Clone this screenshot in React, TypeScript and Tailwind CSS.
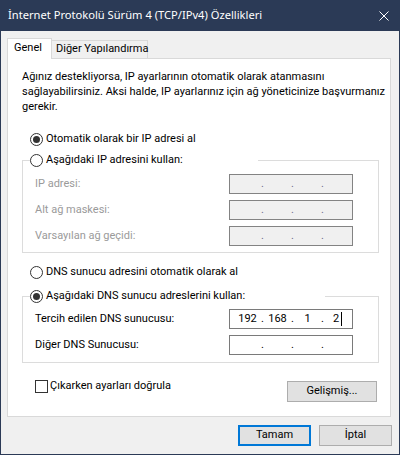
import React from "react";

function Radio({ checked }: { checked?: boolean }) {
  return (
    <svg width="13" height="13" viewBox="0 0 13 13" className="shrink-0">
      <circle cx="6.5" cy="6.5" r="6" fill="white" stroke="#333333" strokeWidth="1" />
      {checked && <circle cx="6.5" cy="6.5" r="3.5" fill="#333333" />}
    </svg>
  );
}

function IpField({ values, disabled, caret }: { values?: string[]; disabled?: boolean; caret?: boolean }) {
  const v = values ?? ["", "", "", ""];
  const dotColor = disabled ? "text-[#6d6d8d]" : "text-black";
  return (
    <div
      className={`w-[124px] h-[20px] border flex items-center pl-[5px] ${
        disabled ? "bg-[#f0f0f0] border-[#838383]" : "bg-white border-[#7a7a7a]"
      }`}
    >
      <span className="w-[25px] text-center">{v[0]}</span>
      <span className={`w-[5px] text-center ${dotColor}`}>.</span>
      <span className="w-[25px] text-center">{v[1]}</span>
      <span className={`w-[5px] text-center ${dotColor}`}>.</span>
      <span className="w-[25px] text-center">{v[2]}</span>
      <span className={`w-[5px] text-center ${dotColor}`}>.</span>
      <span className="w-[25px] flex items-center justify-center">
        <span>{v[3]}</span>
        {caret && <span className="inline-block w-px h-[14px] bg-black ml-[2px]" />}
      </span>
    </div>
  );
}

function FieldRow({ label, disabled, values, caret }: { label: string; disabled?: boolean; values?: string[]; caret?: boolean }) {
  return (
    <div className="flex items-center pl-[5px]">
      <span className={`w-[194px] whitespace-nowrap ${disabled ? "text-[#9a9a9a]" : "text-black"}`}>{label}</span>
      <IpField disabled={disabled} values={values} caret={caret} />
    </div>
  );
}

export default function App() {
  return (
    <div className="w-[400px] h-[455px] flex flex-col font-['Roboto',sans-serif] text-[11px] text-black select-none">
      {/* Title bar */}
      <div className="h-[31px] bg-[#2b3a56] flex items-center justify-between pl-[8px] pr-[11px] shrink-0">
        <span className="text-white text-[11.15px] font-['Noto_Sans',sans-serif] whitespace-nowrap">
          İnternet Protokolü Sürüm 4 (TCP/IPv4) Özellikleri
        </span>
        <svg width="10" height="10" viewBox="0 0 10 10">
          <path d="M0.5 0.5 L9.5 9.5 M9.5 0.5 L0.5 9.5" stroke="white" strokeWidth="1" />
        </svg>
      </div>

      {/* Body */}
      <div className="flex-1 bg-[#f0f0f0] border-x border-b border-[#2b3a56] flex flex-col pl-[6px] pr-[7px]">
        {/* Tabs */}
        <div className="flex items-end mt-[7px] h-[20px]">
          <div className="relative z-10 w-[45px] h-[21px] -mb-px bg-white border-t border-x border-[#d9d9d9] flex items-center pl-[6px] pb-[1px] whitespace-nowrap">
            Genel
          </div>
          <div className="w-[96px] h-[18px] bg-[#f0f0f0] border-t border-r border-[#d9d9d9] flex items-center pl-[4px] whitespace-nowrap">
            Diğer Yapılandırma
          </div>
        </div>

        {/* Panel */}
        <div className="w-[384px] h-[359px] bg-white border border-[#d9d9d9] flex flex-col pl-[14px] pr-[11px]">
          <p className="mt-[10px] leading-[15px] whitespace-nowrap">
            Ağınız destekliyorsa, IP ayarlarının otomatik olarak atanmasını
            <br />
            sağlayabilirsiniz. Aksi halde, IP ayarlarınız için ağ yöneticinize başvurmanız
            <br />
            gerekir.
          </p>

          <div className="mt-[17px] h-[16px] flex items-center pl-[8px] gap-[3px] whitespace-nowrap">
            <Radio checked />
            <span>Otomatik olarak bir IP adresi al</span>
          </div>

          <fieldset className="mt-[5px] border border-[#dcdcdc] pl-[7px] pb-[6px]">
            <legend className="w-[228px] h-[16px] flex items-center gap-[3px] bg-white whitespace-nowrap">
              <Radio />
              <span>Aşağıdaki IP adresini kullan:</span>
            </legend>
            <div className="mt-[6px] flex flex-col gap-[6px]">
              <FieldRow label="IP adresi:" disabled />
              <FieldRow label="Alt ağ maskesi:" disabled />
              <FieldRow label="Varsayılan ağ geçidi:" disabled />
            </div>
          </fieldset>

          <div className="mt-[11px] h-[16px] flex items-center pl-[8px] gap-[3px] whitespace-nowrap">
            <Radio />
            <span>DNS sunucu adresini otomatik olarak al</span>
          </div>

          <fieldset className="mt-[8px] border border-[#dcdcdc] pl-[7px] pb-[7px]">
            <legend className="w-[295px] h-[16px] flex items-center gap-[3px] bg-white whitespace-nowrap">
              <Radio checked />
              <span>Aşağıdaki DNS sunucu adreslerini kullan:</span>
            </legend>
            <div className="mt-[5px] flex flex-col gap-[6px]">
              <FieldRow label="Tercih edilen DNS sunucusu:" values={["192", "168", "1", "2"]} caret />
              <FieldRow label="Diğer DNS Sunucusu:" />
            </div>
          </fieldset>

          <div className="mt-[18px] flex items-start justify-between pr-[2px]">
            <div className="-mt-px ml-[13px] flex items-center gap-[2px] h-[13px] whitespace-nowrap">
              <div className="w-[13px] h-[13px] border border-[#333333] bg-white" />
              <span>Çıkarken ayarları doğrula</span>
            </div>
            <button className="w-[90px] h-[21px] bg-[#e1e1e1] border border-[#adadad] flex items-center justify-center">
              Gelişmiş...
            </button>
          </div>
        </div>

        {/* Footer buttons */}
        <div className="mt-[8px] flex justify-end gap-[8px]">
          <button className="w-[73px] h-[21px] bg-[#e1e1e1] border-2 border-[#0078d7] flex items-center justify-center">
            Tamam
          </button>
          <button className="w-[73px] h-[21px] bg-[#e1e1e1] border border-[#adadad] flex items-center justify-center">
            İptal
          </button>
        </div>
      </div>
    </div>
  );
}
